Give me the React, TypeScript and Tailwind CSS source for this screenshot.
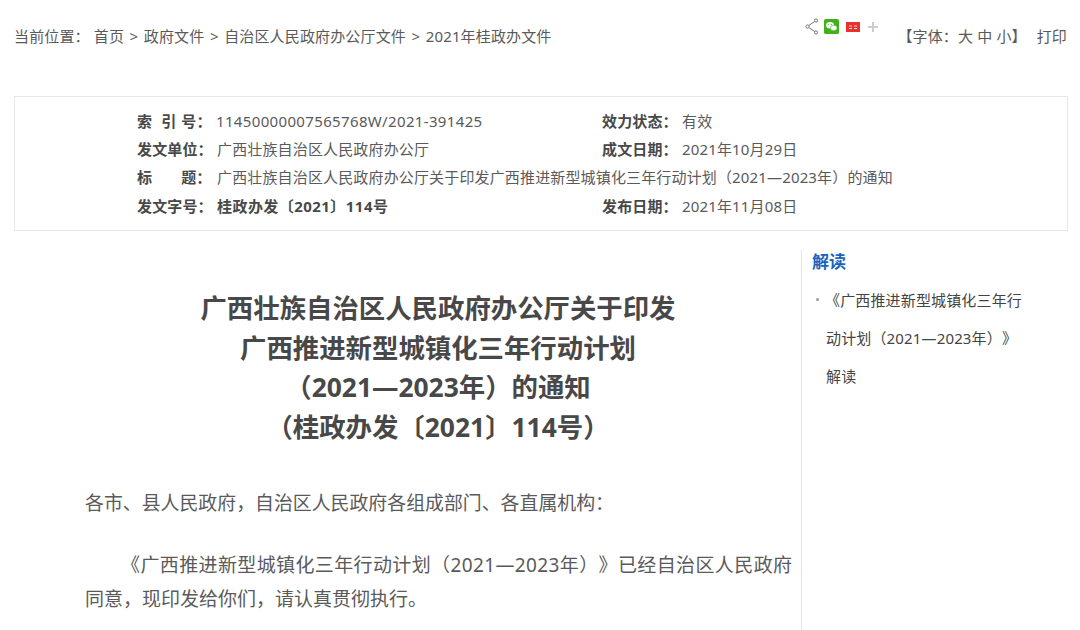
import React from "react";

const font = { fontFamily: '"Noto Sans", "Noto Sans CJK SC", sans-serif' };

function Row({ l1, v1, l2, v2, boldV, vClass }: { l1: React.ReactNode; v1: string; l2?: string; v2?: string; boldV?: boolean; vClass?: string }) {
  return (
    <div className="flex h-[28.3px] items-center">
      <div className="w-[80px] shrink-0 whitespace-nowrap font-bold text-[#484848]">{l1}</div>
      <div className={`w-[385px] shrink-0 whitespace-nowrap ${boldV ? "font-bold text-[#484848]" : "text-[#5a5a5a]"} ${vClass ?? ""}`}>{v1}</div>
      {l2 && <div className="w-[80px] shrink-0 font-bold text-[#484848]">{l2}</div>}
      {v2 && <div className="text-[#5a5a5a]">{v2}</div>}
    </div>
  );
}

export default function App() {
  return (
    <div className="h-[630px] w-[1080px] overflow-hidden bg-white [text-spacing-trim:space-all]" style={font}>
      <div className="flex h-[96px] items-start justify-between pl-[14px] pr-[13px]">
        <div className="mt-[26px] whitespace-nowrap text-[15px] leading-[20px] tracking-[0.15px] text-[#5a5a5a]">
          <span className="mr-[4px]">当前位置：</span>
          <span>首页</span>
          <span className="mx-[5.5px]">&gt;</span>
          <span>政府文件</span>
          <span className="mx-[5.5px]">&gt;</span>
          <span>自治区人民政府办公厅文件</span>
          <span className="mx-[5.5px]">&gt;</span>
          <span>2021年桂政办文件</span>
        </div>
        <div className="flex items-start">
          <div className="mt-[18px] flex items-center">
            <svg width="14" height="17" viewBox="0 0 14 17" fill="none" stroke="#777" strokeWidth="1">
              <circle cx="11" cy="2.5" r="1.6" />
              <circle cx="2.5" cy="8.5" r="1.6" />
              <circle cx="11" cy="14.5" r="1.6" />
              <path d="M9.7 3.5 3.8 7.5M3.8 9.5l5.9 4" />
            </svg>
            <svg className="ml-[5px]" width="15" height="15" viewBox="0 0 16 16">
              <rect width="16" height="16" rx="2" fill="#3fb21b" />
              <ellipse cx="6.4" cy="6.6" rx="4.2" ry="3.4" fill="#fff" />
              <ellipse cx="10.4" cy="9.6" rx="3.6" ry="2.9" fill="#fff" stroke="#3fb21b" strokeWidth=".6" />
              <circle cx="5" cy="6" r=".6" fill="#3fb21b" />
              <circle cx="7.8" cy="6" r=".6" fill="#3fb21b" />
            </svg>
            <svg className="ml-[7px]" width="14" height="10" viewBox="0 0 14 10">
              <rect width="14" height="10" fill="#e8302e" />
              <path d="M3 4h3M3 6.5h3M8 4h3M8 6.5h3" stroke="#fff" strokeWidth="1" opacity=".8" />
            </svg>
            <svg className="ml-[8px]" width="10" height="10" viewBox="0 0 10 10">
              <path d="M5 0v10M0 5h10" stroke="#ccc" strokeWidth="2" />
            </svg>
          </div>
          <div className="ml-[19px] mt-[26px] whitespace-nowrap text-[15px] leading-[20px] tracking-[0.15px] text-[#5a5a5a]">
            <span>【字体：大 中 小】</span>
            <span className="ml-[10px]">打印</span>
          </div>
        </div>
      </div>

      <div className="mx-[14px] h-[135px] w-[1054px] border border-[#e8e8e8] pl-[122px] pt-[10px] text-[15px] tracking-[0.15px]">
        <Row
          l1={
            <>
              <span>索</span>
              <span className="ml-[9px]">引</span>
              <span className="ml-[5px]">号：</span>
            </>
          }
          v1="11450000007565768W/2021-391425"
          vClass="tracking-[0.35px] -ml-[1px] mr-[1px]"
          l2="效力状态："
          v2="有效"
        />
        <Row l1="发文单位：" v1="广西壮族自治区人民政府办公厅" l2="成文日期：" v2="2021年10月29日" />
        <Row
          l1={
            <>
              <span>标</span>
              <span className="ml-[29px]">题：</span>
            </>
          }
          v1="广西壮族自治区人民政府办公厅关于印发广西推进新型城镇化三年行动计划（2021—2023年）的通知"
        />
        <Row l1="发文字号：" v1="桂政办发〔2021〕114号" vClass="tracking-[0.45px]" boldV l2="发布日期：" v2="2021年11月08日" />
      </div>

      <div className="mt-[19px] flex h-[400px] pl-[14px]">
        <div className="w-[788px] shrink-0 border-r border-[#e5e5e5] pl-[71px] pr-[7px] pt-[39px]">
          <h1 className="pr-[3px] text-center text-[26.4px] font-bold leading-[39.6px] text-[#484848]">
            广西壮族自治区人民政府办公厅关于印发
            <br />
            广西推进新型城镇化三年行动计划
            <br />
            （2021—2023年）的通知
            <br />
            （桂政办发〔2021〕114号）
          </h1>
          <p className="mt-[39px] text-[18.9px] leading-[34px] text-[#5a5a5a]">各市、县人民政府，自治区人民政府各组成部门、各直属机构：</p>
          <p className="mt-[28px] indent-[36px] text-[19px] leading-[34px] text-[#5a5a5a]">
            <span className="tracking-[0.38px]">《广西推进新型城镇化三年行动计划（2021—2023年）》已经自治区人民政府</span>
            同意，现印发给你们，请认真贯彻执行。
          </p>
        </div>
        <div className="pl-[10px]">
          <h2 className="text-[17px] font-bold leading-[24px] text-[#1a64c0]">解读</h2>
          <div className="relative mt-[7px] w-[212px] pl-[14px] text-[15px] leading-[38px] tracking-[0.15px] text-[#444]">
            <span className="absolute left-[4px] top-[17px] h-[3px] w-[3px] rounded-full bg-[#999]" />
            <div className="-ml-[1px] whitespace-nowrap">《广西推进新型城镇化三年行</div>
            <div className="whitespace-nowrap">动计划（2021—2023年）》</div>
            <div>解读</div>
          </div>
        </div>
      </div>
    </div>
  );
}
